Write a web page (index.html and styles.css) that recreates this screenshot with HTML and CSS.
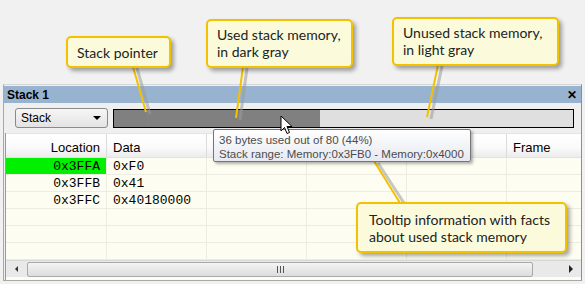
FILE: index.html
```html
<!DOCTYPE html>
<html>
<head>
<meta charset="utf-8">
<link rel="stylesheet" href="styles.css">
</head>
<body>
<div class="stage">
  <div class="window">
    <div class="titlebar"><span class="title">Stack 1</span><span class="close">✕</span></div>
    <div class="toolbar">
      <div class="combo"><span>Stack</span><span class="caret"></span></div>
      <div class="bar"><div class="used" style="width:206px"><div class="sp" style="left:33px"></div></div></div>
    </div>
    <div class="table">
      <div class="row head">
        <div class="cell loc">Location</div>
        <div class="cell">Data</div>
        <div class="cell"></div>
        <div class="cell"></div>
        <div class="cell"></div>
        <div class="cell last">Frame</div>
      </div>
      <div class="row">
        <div class="cell loc mono current">0x3FFA</div>
        <div class="cell mono">0xF0</div>
        <div class="cell"></div><div class="cell"></div><div class="cell"></div><div class="cell last"></div>
      </div>
      <div class="row">
        <div class="cell loc mono">0x3FFB</div>
        <div class="cell mono">0x41</div>
        <div class="cell"></div><div class="cell"></div><div class="cell"></div><div class="cell last"></div>
      </div>
      <div class="row">
        <div class="cell loc mono">0x3FFC</div>
        <div class="cell mono wide">0x40180000</div>
        <div class="cell"></div><div class="cell"></div><div class="cell"></div><div class="cell last"></div>
      </div>
      <div class="row">
        <div class="cell loc"></div><div class="cell"></div><div class="cell"></div><div class="cell"></div><div class="cell"></div><div class="cell last"></div>
      </div>
      <div class="row">
        <div class="cell loc"></div><div class="cell"></div><div class="cell"></div><div class="cell"></div><div class="cell"></div><div class="cell last"></div>
      </div>
      <div class="row">
        <div class="cell loc"></div><div class="cell"></div><div class="cell"></div><div class="cell"></div><div class="cell"></div><div class="cell last"></div>
      </div>
      <div class="hscroll">
        <div class="arrow left"></div>
        <div class="thumb"><span class="grip"></span></div>
        <div class="arrow right"></div>
      </div>
    </div>
  </div>

  <svg class="leaders" width="585" height="284" viewBox="0 0 585 284">
    <g stroke="#9a9a9a" stroke-opacity="0.55" stroke-width="3" fill="none">
      <line x1="137" y1="68" x2="150" y2="114"/>
      <line x1="247" y1="68" x2="240" y2="120"/>
      <line x1="442" y1="66" x2="431" y2="119"/>
      <line x1="378" y1="163" x2="404" y2="203"/>
    </g>
    <g stroke="#f2c200" stroke-width="2" fill="none">
      <line x1="133" y1="67" x2="146" y2="112"/>
      <line x1="243" y1="67" x2="236" y2="118"/>
      <line x1="438" y1="65" x2="427" y2="117"/>
      <line x1="374" y1="161" x2="400" y2="203"/>
    </g>
  </svg>

  <div class="tooltip">
    <div>36 bytes used out of 80 (44%)</div>
    <div>Stack range: Memory:0x3FB0 - Memory:0x4000</div>
  </div>

  <svg class="cursor" width="14" height="20" viewBox="0 0 14 20">
    <path d="M1 1 L1 16 L4.5 12.5 L7 18.5 L9.5 17.5 L7 11.5 L12 11.5 Z" fill="#fff" stroke="#000" stroke-width="1" stroke-linejoin="miter"/>
  </svg>

  <div class="callout c1">Stack pointer</div>
  <div class="callout c2">Used stack memory,<br>in dark gray</div>
  <div class="callout c3">Unused stack memory,<br>in light gray</div>
  <div class="callout c4">Tooltip information with facts<br>about used stack memory</div>
</div>
</body>
</html>
```

FILE: styles.css
```css
* { box-sizing: border-box; }
html, body { margin: 0; padding: 0; }
body { background: #f1f1f1; font-family: "Liberation Sans", Arial, sans-serif; }

.stage { position: relative; width: 585px; height: 284px; overflow: hidden; }

.window {
  position: relative;
  margin: 84px 0 0 3px;
  width: 579px;
  height: 197px;
  border-top: 1px solid #d6d6d6;
  border-left: 1px solid #a8a8a8;
  border-right: 1px solid #8e8e8e;
  border-bottom: 1px solid #a8a8a8;
  background: #efefef;
  display: flex;
  flex-direction: column;
}

.titlebar {
  margin-top: 1px;
  height: 17px;
  background: #98b3cf;
  display: flex;
  align-items: center;
  justify-content: space-between;
  padding: 0 4px 0 3px;
}
.title { font-weight: bold; font-size: 12px; color: #000; }
.close { font-size: 12px; font-weight: bold; color: #000; line-height: 1; }

.toolbar {
  display: flex;
  gap: 5px;
  padding: 5px 7px 0 11px;
  height: 30px;
  align-items: flex-start;
}
.combo {
  width: 93px;
  height: 20px;
  border: 1px solid #8a8a8a;
  border-radius: 3px;
  background: linear-gradient(#f6f6f6, #e3e3e3);
  display: flex;
  align-items: center;
  justify-content: space-between;
  padding: 0 6px 0 5px;
  font-size: 12px;
}
.caret {
  width: 0; height: 0;
  border-left: 4px solid transparent;
  border-right: 4px solid transparent;
  border-top: 4px solid #000;
}
.bar {
  flex: 1;
  height: 19px;
  margin-top: 1px;
  border: 1px solid #000;
  background: #dfdfdf;
  display: flex;
}
.used { position: relative; height: 100%; background: #808080; }
.sp { position: absolute; top: 0; bottom: 0; width: 1px; background: #00e000; }

.table {
  flex: 1;
  margin: 0 0 0 1px;
  border-left: 1px solid #9a9a9a;
  background: #fdfdf1;
  display: flex;
  flex-direction: column;
}
.row { display: flex; height: 17px; border-bottom: 1px solid #ecece2; }
.row.head {
  height: 25px;
  background: linear-gradient(#ffffff 0%, #fafafa 60%, #ececec 100%);
  border-top: 1px solid #e4e4e4;
  border-bottom: 1px solid #e2e2e2;
  font-size: 13px;
}
.cell {
  width: 100px;
  border-right: 1px solid #ecece2;
  padding: 0 6px;
  display: flex;
  align-items: center;
  white-space: nowrap;
}
.head .cell { border-right: 1px solid #dcdcdc; padding-top: 3px; }
.cell.loc { width: 101px; justify-content: flex-end; }
.cell.last { flex: 1; border-right: none; }
.mono { font-family: "Liberation Mono", "Courier New", monospace; font-size: 13px; color: #000; }
.current { background: #00f000; }

.hscroll {
  height: 17px;
  display: flex;
  align-items: center;
  background: #e9e9e9;
  border-top: 1px solid #d8d8d8;
  padding: 0 2px;
}
.arrow { width: 16px; height: 15px; display: flex; align-items: center; justify-content: center; }
.arrow.left::before {
  content: ""; width: 0; height: 0;
  border-top: 3px solid transparent; border-bottom: 3px solid transparent;
  border-right: 3px solid #333;
}
.arrow.right::before {
  content: ""; width: 0; height: 0;
  border-top: 4px solid transparent; border-bottom: 4px solid transparent;
  border-left: 4px solid #222;
}
.thumb {
  flex: 1;
  margin: 0 30px 0 3px;
  height: 15px;
  border: 1px solid #a9a9a9;
  border-radius: 2px;
  background: linear-gradient(#f4f4f4, #dcdcdc);
  display: flex;
  align-items: center;
  justify-content: center;
}
.grip {
  width: 7px; height: 7px;
  background: repeating-linear-gradient(90deg, #555 0 1px, transparent 1px 3px);
}

.leaders { position: absolute; left: 0; top: 0; pointer-events: none; }

.tooltip {
  position: absolute;
  left: 213px;
  top: 129px;
  width: 258px;
  height: 33px;
  border: 1px solid #767676;
  border-radius: 2px;
  background: linear-gradient(#ffffff, #e6e9f0);
  box-shadow: 2px 2px 3px rgba(0,0,0,0.3);
  font-family: "Liberation Sans", Arial, sans-serif;
  font-size: 11.5px;
  line-height: 14px;
  color: #4c4c4c;
  padding: 3px 0 0 5px;
  white-space: nowrap;
}

.cursor { position: absolute; left: 280px; top: 115px; }

.callout {
  position: absolute;
  background: #fbfbdb;
  border: 2px solid #f2c200;
  border-radius: 5px;
  box-shadow: 3px 3px 4px rgba(0,0,0,0.35);
  font-family: Lato, "Open Sans", sans-serif;
  font-size: 14px;
  line-height: 17px;
  color: #222;
  padding: 5px 0 0 9px;
  white-space: nowrap;
}
.c1 { left: 66px; top: 36px; width: 105px; height: 32px; padding-top: 6px; }
.c2 { left: 206px; top: 19px; width: 147px; height: 49px; }
.c3 { left: 392px; top: 17px; width: 167px; height: 49px; }
.c4 { left: 356px; top: 202px; width: 211px; height: 51px; padding-top: 7px; padding-left: 11px; }
```
